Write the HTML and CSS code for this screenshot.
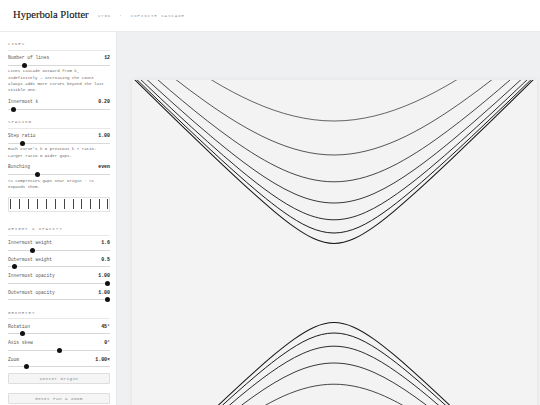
FILE: index.html
```html
<!DOCTYPE html>
<html lang="en">
<head>
<meta charset="utf-8">
<title>Hyperbola Plotter</title>
<link rel="stylesheet" href="styles.css">
</head>
<body>
<div class="app">
  <header class="topbar">
    <h1 class="title">Hyperbola Plotter</h1>
    <span class="subtitle">xy=k</span><span class="subtitle sep">·</span><span class="subtitle">infinite cascade</span>
  </header>
  <div class="workspace">
    <aside class="sidebar">
      <section class="group">
        <h2 class="group-title">Lines</h2>
        <div class="control">
          <div class="row"><span class="label">Number of lines</span><span class="val">12</span></div>
          <div class="slider"><span class="thumb" style="--p:0.14"></span></div>
          <p class="hint">Lines cascade outward from k,<br>indefinitely — increasing the count<br>always adds more curves beyond the last<br>visible one.</p>
        </div>
        <div class="control">
          <div class="row"><span class="label">Innermost k</span><span class="val">0.20</span></div>
          <div class="slider"><span class="thumb" style="--p:0.036"></span></div>
        </div>
      </section>
      <section class="group">
        <h2 class="group-title">Spacing</h2>
        <div class="control">
          <div class="row"><span class="label">Step ratio</span><span class="val">1.00</span></div>
          <div class="slider"><span class="thumb" style="--p:0.12"></span></div>
          <p class="hint">Each curve's k = previous k × ratio.<br>Larger ratio = wider gaps.</p>
        </div>
        <div class="control">
          <div class="row"><span class="label">Bunching</span><span class="val">even</span></div>
          <div class="slider"><span class="thumb" style="--p:0.28"></span></div>
          <p class="hint">&lt;1 compresses gaps near origin · &gt;1<br>expands them.</p>
        </div>
        <div class="ticks">
          <span class="tick" style="--w:1.1px"></span>
          <span class="tick" style="--w:1.05px"></span>
          <span class="tick" style="--w:1px"></span>
          <span class="tick" style="--w:0.95px"></span>
          <span class="tick" style="--w:0.9px"></span>
          <span class="tick" style="--w:0.85px"></span>
          <span class="tick" style="--w:0.8px"></span>
          <span class="tick" style="--w:0.75px"></span>
          <span class="tick" style="--w:0.7px"></span>
          <span class="tick" style="--w:0.65px"></span>
          <span class="tick" style="--w:0.6px"></span>
          <span class="tick" style="--w:0.55px"></span>
        </div>
      </section>
      <section class="group">
        <h2 class="group-title">Weight &amp; Opacity</h2>
        <div class="control">
          <div class="row"><span class="label">Innermost weight</span><span class="val">1.6</span></div>
          <div class="slider"><span class="thumb" style="--p:0.23"></span></div>
        </div>
        <div class="control">
          <div class="row"><span class="label">Outermost weight</span><span class="val">0.5</span></div>
          <div class="slider"><span class="thumb" style="--p:0.046"></span></div>
        </div>
        <div class="control">
          <div class="row"><span class="label">Innermost opacity</span><span class="val">1.00</span></div>
          <div class="slider"><span class="thumb" style="--p:1"></span></div>
        </div>
        <div class="control">
          <div class="row"><span class="label">Outermost opacity</span><span class="val">1.00</span></div>
          <div class="slider"><span class="thumb" style="--p:1"></span></div>
        </div>
      </section>
      <section class="group">
        <h2 class="group-title">Geometry</h2>
        <div class="control">
          <div class="row"><span class="label">Rotation</span><span class="val">45°</span></div>
          <div class="slider"><span class="thumb" style="--p:0.12"></span></div>
        </div>
        <div class="control">
          <div class="row"><span class="label">Axis skew</span><span class="val">0°</span></div>
          <div class="slider"><span class="thumb" style="--p:0.5"></span></div>
        </div>
        <div class="control">
          <div class="row"><span class="label">Zoom</span><span class="val">1.00×</span></div>
          <div class="slider"><span class="thumb" style="--p:0.16"></span></div>
        </div>
        <button class="btn" type="button">Center Origin</button>
        <button class="btn" type="button">Reset Pan &amp; Zoom</button>
      </section>
    </aside>
    <main class="stage">
      <div class="panel">
        <svg class="plot" viewBox="0 0 405 405" xmlns="http://www.w3.org/2000/svg">
          <defs>
            <path id="hyp" fill="none" vector-effect="non-scaling-stroke" d="M-6,6.082763 C-5.333333,5.425167 -4.666667,4.769868 -4,4.123106 C-3.666667,3.799725 -3.333333,3.478506 -3,3.162278 C-2.666667,2.846050 -2.333333,2.534210 -2,2.236068 C-1.833333,2.086997 -1.666667,1.941451 -1.5,1.802776 C-1.333333,1.664101 -1.166667,1.532065 -1,1.414214 C-0.833333,1.296363 -0.666667,1.192570 -0.5,1.118034 C-0.333333,1.043498 -0.166667,1 0,1 C0.166667,1 0.333333,1.043498 0.5,1.118034 C0.666667,1.192570 0.833333,1.296363 1,1.414214 C1.166667,1.532065 1.333333,1.664101 1.5,1.802776 C1.666667,1.941451 1.833333,2.086997 2,2.236068 C2.333333,2.534210 2.666667,2.846050 3,3.162278 C3.333333,3.478506 3.666667,3.799725 4,4.123106 C4.666667,4.769868 5.333333,5.425167 6,6.082763"/>
          </defs>
          <g transform="translate(202 203)" stroke="#161616" fill="none">
            <use href="#hyp" transform="scale(39.5 -39.5)" stroke-width="1.04"/>
            <use href="#hyp" transform="scale(39.5 39.5)" stroke-width="1.04"/>
            <use href="#hyp" transform="scale(50 -50)" stroke-width="0.975"/>
            <use href="#hyp" transform="scale(50 50)" stroke-width="0.975"/>
            <use href="#hyp" transform="scale(63.2 -63.2)" stroke-width="0.91"/>
            <use href="#hyp" transform="scale(63.2 63.2)" stroke-width="0.91"/>
            <use href="#hyp" transform="scale(80 -80)" stroke-width="0.845"/>
            <use href="#hyp" transform="scale(80 80)" stroke-width="0.845"/>
            <use href="#hyp" transform="scale(101.2 -101.2)" stroke-width="0.78"/>
            <use href="#hyp" transform="scale(101.2 101.2)" stroke-width="0.78"/>
            <use href="#hyp" transform="scale(128 -128)" stroke-width="0.715"/>
            <use href="#hyp" transform="scale(128 128)" stroke-width="0.715"/>
            <use href="#hyp" transform="scale(162 -162)" stroke-width="0.65"/>
            <use href="#hyp" transform="scale(162 162)" stroke-width="0.65"/>
            <use href="#hyp" transform="scale(205 -205)" stroke-width="0.585"/>
            <use href="#hyp" transform="scale(205 205)" stroke-width="0.585"/>
            <use href="#hyp" transform="scale(259 -259)" stroke-width="0.52"/>
            <use href="#hyp" transform="scale(259 259)" stroke-width="0.52"/>
            <use href="#hyp" transform="scale(328 -328)" stroke-width="0.455"/>
            <use href="#hyp" transform="scale(328 328)" stroke-width="0.455"/>
            <use href="#hyp" transform="scale(415 -415)" stroke-width="0.39"/>
            <use href="#hyp" transform="scale(415 415)" stroke-width="0.39"/>
            <use href="#hyp" transform="scale(525 -525)" stroke-width="0.325"/>
            <use href="#hyp" transform="scale(525 525)" stroke-width="0.325"/>
          </g>
        </svg>
      </div>
    </main>
  </div>
</div>
</body>
</html>
```

FILE: styles.css
```css
* { box-sizing: border-box; }

html, body {
  margin: 0;
  padding: 0;
  width: 540px;
  height: 405px;
  overflow: hidden;
  background: #ffffff;
}

.app {
  display: flex;
  flex-direction: column;
  height: 405px;
  font-family: "Liberation Mono", "DejaVu Sans Mono", monospace;
  color: #333;
}

.topbar {
  height: 32px;
  flex: 0 0 32px;
  display: flex;
  align-items: center;
  padding: 0 0 1px 13px;
  border-bottom: 1px solid #ebebeb;
  background: #fff;
}

.title {
  margin: 0 9px 0 0;
  font-family: "Liberation Serif", "DejaVu Serif", serif;
  font-weight: 400;
  font-size: 10.6px;
  line-height: 12px;
  color: #151515;
  -webkit-text-stroke: 0.15px #151515;
}

.subtitle {
  margin-top: 1px;
  font-size: 4.3px;
  letter-spacing: 0.82px;
  text-transform: uppercase;
  color: #9c9c9c;
}

.sep { margin: 1px 8px 0 7.5px; font-size: 5px; }

.workspace {
  flex: 1;
  display: flex;
  min-height: 0;
}

.sidebar {
  width: 117px;
  flex: 0 0 117px;
  padding: 9.3px 6px 0 8px;
  border-right: 1px solid #e7e7e7;
  background: #fff;
  overflow: hidden;
}

.group + .group { padding-top: 3.5px; }

.group-title {
  margin: 0 0 4.5px;
  padding-bottom: 2.5px;
  border-bottom: 1px solid #e8e8e8;
  font-size: 4.2px;
  line-height: 6px;
  font-weight: 400;
  letter-spacing: 0.9px;
  text-transform: uppercase;
  color: #888;
}

.control { margin-bottom: 4px; }

.row {
  display: flex;
  justify-content: space-between;
  align-items: baseline;
  line-height: 6px;
}

.label {
  font-size: 4.6px;
  color: #585858;
}

.val {
  font-size: 4.9px;
  font-weight: 700;
  color: #222;
}

.slider {
  position: relative;
  height: 5px;
  margin-top: 1.5px;
}

.slider::before {
  content: "";
  position: absolute;
  left: 0;
  right: 0;
  top: 2px;
  height: 1px;
  background: #d8d8d8;
}

.thumb {
  position: absolute;
  top: 0;
  left: calc(2.5px + var(--p) * (100% - 5px));
  width: 5px;
  height: 5px;
  margin-left: -2.5px;
  border-radius: 50%;
  background: #111;
}

.hint {
  margin: 0.65px 0 0;
  padding-bottom: 1.5px;
  font-size: 4.1px;
  line-height: 6.3px;
  color: #6a6a6a;
  white-space: nowrap;
}

.ticks {
  margin: 5.25px 0 11.1px;
  height: 15px;
  padding: 1.5px 1.2px;
  border: 1px solid #e2e2e2;
  display: flex;
  justify-content: space-between;
  align-items: stretch;
}

.tick {
  width: var(--w);
  background: #444;
}

.btn {
  display: block;
  width: 100%;
  height: 11px;
  margin: 0 0 9px;
  padding: 0;
  border: 1px solid #dedede;
  border-radius: 1px;
  background: #f5f5f5;
  font-family: "Liberation Mono", "DejaVu Sans Mono", monospace;
  font-size: 4.3px;
  letter-spacing: 0.4px;
  color: #858585;
}

.stage {
  flex: 1;
  min-width: 0;
  background: #eff0f2;
  padding: 48px 0 0 15px;
  overflow: hidden;
}

.panel {
  width: 405px;
  height: 405px;
  background: #f3f3f3;
  box-shadow: 0 0 5px rgba(0, 0, 0, 0.06);
}

.plot {
  display: block;
  width: 405px;
  height: 405px;
}
```
